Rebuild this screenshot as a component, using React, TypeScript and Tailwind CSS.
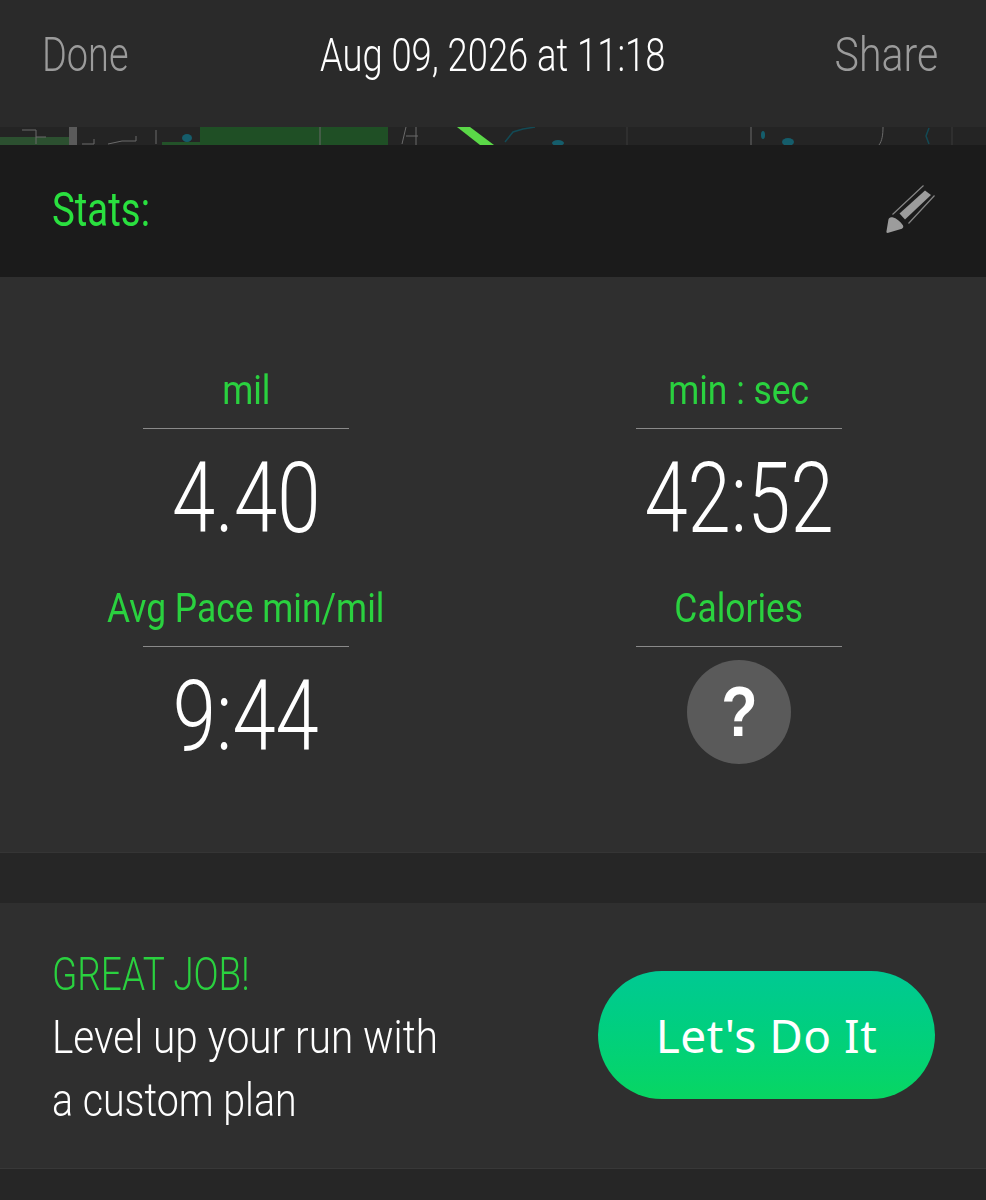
const condensed = "font-['Roboto','Liberation_Sans',sans-serif] font-light";
const regular = "font-['Roboto','Liberation_Sans',sans-serif] font-normal";

const Squeezed = ({ children, className }: { children: React.ReactNode; className: string }) => (
  <span className={`whitespace-nowrap ${className}`}>{children}</span>
);

const MapStrip = () => (
  <div className="h-[18px] overflow-hidden bg-[#242424]">
    <svg width="986" height="18" viewBox="0 127 986 18" className="block blur-[0.4px]">
      <rect x="0" y="137" width="70" height="8" fill="#2c5030" />
      <rect x="69" y="127" width="8" height="18" fill="#5a5a5a" />
      <rect x="162" y="142" width="38" height="3" fill="#235229" />
      <rect x="200" y="127" width="188" height="18" fill="#1f4f25" />
      <path d="M22 130h14v14M36 137h10M82 144h12v-5M108 144l14-3h14v-5M156 130v14M320 127v18M402 144l4-17M406 136h12M416 127v18" stroke="#6b6b6b" strokeWidth="1" fill="none" />
      <ellipse cx="187" cy="138" rx="5" ry="4" fill="#155d6b" />
      <path d="M457 127h13l24 18h-14z" fill="#5bd848" />
      <path d="M505 142l8-10 10-3 12-2" stroke="#134a55" strokeWidth="1.5" fill="none" />
      <ellipse cx="558" cy="143" rx="6" ry="3" fill="#155d6b" />
      <path d="M627 127v18" stroke="#3b3b3b" />
      <path d="M751 127v18M883 127c0 8-1 14-4 18" stroke="#6b6b6b" fill="none" />
      <ellipse cx="763" cy="135" rx="2" ry="4" fill="#155d6b" />
      <ellipse cx="788" cy="142" rx="6" ry="4" fill="#155d6b" />
      <path d="M929 128l-3 8 3 8" stroke="#134a55" strokeWidth="1.5" fill="none" />
      <path d="M952 127v18" stroke="#3b3b3b" />
    </svg>
  </div>
);

const PencilIcon = () => (
  <svg width="50" height="52" viewBox="0 0 50 52" className="block">
    <path d="M2.500 49c-.8 0-1.200-.5-1.100-1.200l2-12c.3-2 2-3 4-2.500 4 1 8 4 10.500 8 .8 1.500.3 2.500-1 3.500z" fill="#9c9c9c" />
    <path d="M14.500 29.500L40 6.500l6 4.500L20 35.500z" fill="#9c9c9c" />
    <path d="M7.500 30.500L38.500 1.500M23.500 39.500L49.500 11.500" stroke="#858585" strokeWidth="1.200" />
  </svg>
);

const Stat = ({ label, children }: { label: string; children: React.ReactNode }) => (
  <div className="flex flex-col items-center">
    <div className="flex h-[60px] w-[206px] items-end justify-center border-b border-[#8a8a8a] pb-[15px]">
      <Squeezed className={`inline-block text-[40px] leading-[44px] text-[#2ad13f] scale-x-[0.885] ${regular}`}>{label}</Squeezed>
    </div>
    <div className="flex h-[158px] items-start justify-center">{children}</div>
  </div>
);

const BigValue = ({ value }: { value: string }) => (
  <Squeezed className={`mt-[15px] inline-block text-[98px] leading-[110px] text-white scale-x-[0.795] ${condensed}`}>{value}</Squeezed>
);

export default function App() {
  return (
    <div className="h-[1200px] w-[986px] overflow-hidden bg-[#262626]">
      <header className="grid h-[127px] grid-cols-[1fr_auto_1fr] items-start bg-[#2a2a2a] px-[48px] pt-[26px]">
        <Squeezed className={`-ml-[6px] inline-block origin-left justify-self-start text-[48px] leading-[58px] text-[#9b9b9b] scale-x-[0.79] ${condensed}`}>Done</Squeezed>
        <Squeezed className={`inline-block text-[46px] leading-[58px] text-white scale-x-[0.79] ${condensed}`}>Aug 09, 2026 at 11:18</Squeezed>
        <Squeezed className={`inline-block origin-right justify-self-end text-[48px] leading-[58px] text-[#9b9b9b] scale-x-[0.855] ${condensed}`}>Share</Squeezed>
      </header>
      <MapStrip />
      <section className="flex h-[132px] items-center justify-between bg-[#1b1b1b] pb-[2px] pl-[52px] pr-[51px]">
        <Squeezed className={`inline-block origin-left text-[48px] leading-[58px] text-[#2ae03f] scale-x-[0.8] ${regular}`}>Stats:</Squeezed>
        <PencilIcon />
      </section>

      <section className="h-[576px] border-b border-[#353535] bg-[#2f2f2f] pt-[92px]">
        <div className="grid grid-cols-[492px_494px]">
          <Stat label="mil"><BigValue value="4.40" /></Stat>
          <Stat label="min : sec"><BigValue value="42:52" /></Stat>
          <Stat label="Avg Pace min/mil"><BigValue value="9:44" /></Stat>
          <Stat label="Calories">
            <div className="mt-[13px] flex h-[104px] w-[104px] items-center justify-center rounded-full bg-[#5a5a5a] font-['Liberation_Sans',sans-serif] text-[70px] font-bold leading-none text-white scale-x-100">
              <span className="inline-block scale-x-[0.85]">?</span>
            </div>
          </Stat>
        </div>
      </section>

      <div className="h-[50px] bg-[#262626]" />

      <section className="flex h-[266px] items-center justify-between border-b border-[#383838] bg-[#2f2f2f] pl-[52px] pr-[51px] pt-[3px]">
        <div className="w-[440px] shrink-0 text-[46px] leading-[63px]">
          <Squeezed className={`block origin-left text-[#2ad13f] scale-x-[0.805] ${condensed}`}>GREAT JOB!</Squeezed>
          <Squeezed className={`block origin-left text-white scale-x-[0.88] ${condensed}`}>Level up your run with</Squeezed>
          <Squeezed className={`block origin-left text-white scale-x-[0.855] ${condensed}`}>a custom plan</Squeezed>
        </div>
        <button className="-mt-[5px] flex h-[128px] w-[337px] shrink-0 items-center justify-center rounded-full bg-gradient-to-b from-[#00c993] to-[#08d662] font-['Noto_Sans',sans-serif] text-[46px] leading-none tracking-[0.5px] text-white">
          Let's Do It
        </button>
      </section>
    </div>
  );
}
